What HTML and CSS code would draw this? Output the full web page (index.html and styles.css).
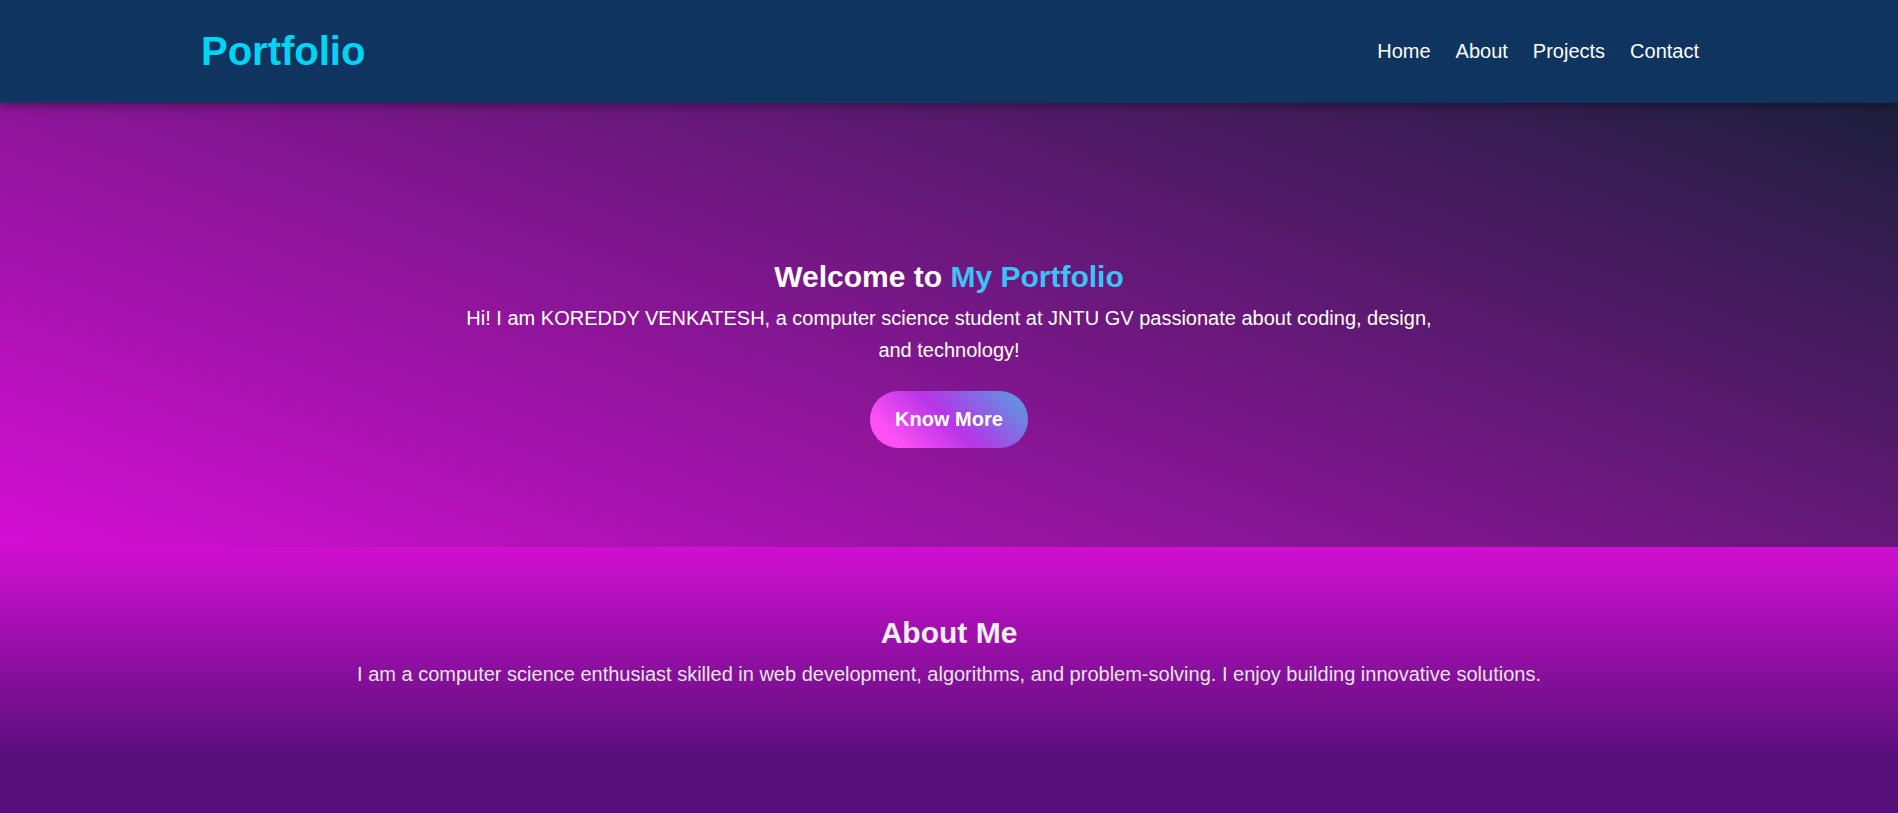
FILE: index.html
```html
<!DOCTYPE html>
<html lang="en">
<head>
<meta charset="UTF-8">
<title>Portfolio</title>
<link rel="stylesheet" href="styles.css">
</head>
<body>
<header class="site-header">
  <div class="header-inner">
    <div class="logo">Portfolio</div>
    <nav class="nav">
      <a href="#home">Home</a>
      <a href="#about">About</a>
      <a href="#projects">Projects</a>
      <a href="#contact">Contact</a>
    </nav>
  </div>
</header>
<section class="hero" id="home">
  <h2 class="hero-title">Welcome to <span class="accent">My Portfolio</span></h2>
  <p class="hero-text">Hi! I am KOREDDY VENKATESH, a computer science student at JNTU GV passionate about coding, design, and technology!</p>
  <a class="btn" href="#about">Know More</a>
</section>
<section class="about" id="about">
  <h2 class="about-title">About Me</h2>
  <p class="about-text">I am a computer science enthusiast skilled in web development, algorithms, and problem-solving. I enjoy building innovative solutions.</p>
</section>
</body>
</html>
```

FILE: styles.css
```css
* { box-sizing: border-box; }

body {
  margin: 0;
  font-family: "Liberation Sans", Arial, sans-serif;
  background: #57107a;
  color: #fff;
}

.site-header {
  background: #0f3460;
  box-shadow: 0 3px 10px rgba(0, 0, 0, 0.35);
  position: relative;
  z-index: 2;
}

.header-inner {
  max-width: 1500px;
  margin: 0 auto;
  padding-left: 2px;
  height: 103px;
  display: flex;
  align-items: center;
  justify-content: space-between;
}

.logo {
  font-size: 40px;
  font-weight: bold;
  color: #00d4f2;
}

.nav {
  display: flex;
  gap: 25px;
}

.nav a {
  color: #fff;
  text-decoration: none;
  font-size: 20px;
}

.hero {
  background: linear-gradient(20deg, #d40fd4 0%, #1c1f3c 100%);
  padding: 157px 20px 99px;
  display: flex;
  flex-direction: column;
  align-items: center;
  text-align: center;
}

.hero-title {
  margin: 0 0 8px;
  font-size: 30px;
  font-weight: bold;
  color: #fff;
}

.accent { color: #3ec2f6; }

.hero-text {
  margin: 0;
  max-width: 1000px;
  font-size: 20px;
  line-height: 32px;
  color: #fff;
}

.btn {
  margin-top: 25px;
  display: inline-block;
  padding: 17px 25px;
  border-radius: 30px;
  font-size: 20px;
  font-weight: bold;
  color: #fff;
  text-decoration: none;
  background: linear-gradient(45deg, #ff50f4 15%, #b535e8 50%, #4fa6df 100%);
}

.about {
  background: linear-gradient(to bottom, #d10fd1 0%, #5a0f7b 100%);
  padding: 69px 20px 65px;
  text-align: center;
}

.about-title {
  margin: 0 0 8px;
  font-size: 30px;
  font-weight: bold;
  color: #eee;
}

.about-text {
  margin: 0;
  font-size: 20px;
  line-height: 32px;
  color: #e6e6e6;
}
```
